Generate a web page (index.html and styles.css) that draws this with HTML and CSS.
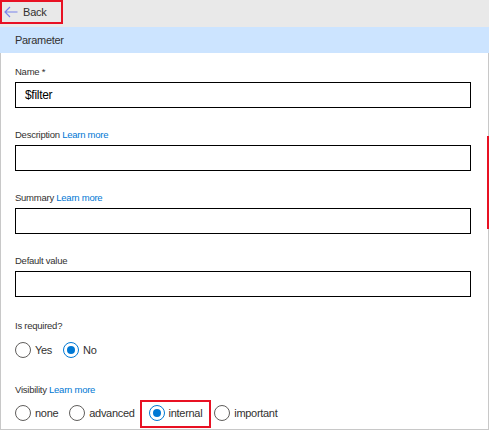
FILE: index.html
```html
<!DOCTYPE html>
<html>
<head>
<meta charset="utf-8">
<link rel="stylesheet" href="styles.css">
</head>
<body>
<div class="page">
  <div class="topbar">
    <div class="back">
      <svg class="arrow" width="14" height="12" viewBox="0 0 14 12"><path d="M13.5 6H1M6 1L1 6l5 5" fill="none" stroke="#7b83eb" stroke-width="1.2"/></svg>
      <span>Back</span>
    </div>
  </div>
  <div class="header">Parameter</div>
  <div class="panel">
    <div class="field">
      <div class="label">Name *</div>
      <div class="input">$filter</div>
    </div>
    <div class="field">
      <div class="label">Description <a class="link">Learn more</a></div>
      <div class="input"></div>
    </div>
    <div class="field">
      <div class="label">Summary <a class="link">Learn more</a></div>
      <div class="input"></div>
    </div>
    <div class="field">
      <div class="label">Default value</div>
      <div class="input"></div>
    </div>
    <div class="group group-req">
      <div class="label">Is required?</div>
      <div class="radios">
        <div class="opt"><span class="radio"></span><span>Yes</span></div>
        <div class="opt"><span class="radio on"></span><span>No</span></div>
      </div>
    </div>
    <div class="group group-vis">
      <div class="label">Visibility <a class="link">Learn more</a></div>
      <div class="radios">
        <div class="opt"><span class="radio"></span><span>none</span></div>
        <div class="opt"><span class="radio"></span><span>advanced</span></div>
        <div class="opt mark"><span class="radio on"></span><span>internal</span></div>
        <div class="opt"><span class="radio"></span><span>important</span></div>
      </div>
    </div>
    <div class="scroll"></div>
  </div>
</div>
</body>
</html>
```
FILE: styles.css
```css
* { box-sizing: border-box; }
html, body { margin: 0; padding: 0; background: #fff; }
body { font-family: "Liberation Sans", Arial, sans-serif; color: #000; }
.page { width: 489px; height: 431px; overflow: hidden; position: relative; }
.topbar { height: 27px; background: #e9e9e9; display: flex; align-items: flex-start; }
.back {
  width: 63px; height: 24px; border: 2px solid #e81123;
  display: flex; align-items: center; gap: 5px; padding-left: 2px;
  font-size: 11px; letter-spacing: -0.2px; color: #323130;
}
.arrow { display: block; }
.header {
  height: 26px; background: #cce4ff; padding-left: 15px;
  display: flex; align-items: center; font-size: 11px; letter-spacing: -0.3px; color: #323130;
}
.panel {
  position: relative; width: 489px; height: 377px;
  border-left: 1px solid #c8c8c8; border-right: 1px solid #c8c8c8; border-bottom: 1px solid #c8c8c8;
  padding: 11px 0 0 14px;
}
.field { margin-bottom: 19px; }
.label {
  font-size: 9.5px; letter-spacing: -0.25px; line-height: 16px; height: 16px;
  margin-bottom: 2px; color: #323130;
}
.link { color: #0078d4; }
.input {
  width: 456px; height: 26px; border: 1px solid #000;
  font-size: 12px; letter-spacing: -0.3px; line-height: 24px; padding-left: 9px; color: #000;
}
.group-req { margin-top: 21px; }
.group-req .label { margin-bottom: 8px; }
.group-vis { margin-top: 24px; }
.group-vis .label { margin-bottom: 7px; }
.radios {
  display: flex; align-items: center; gap: 11px; height: 16px;
  font-size: 11px; letter-spacing: -0.3px; color: #323130;
}
.opt { display: flex; align-items: center; gap: 4px; position: relative; }
.radio {
  width: 16px; height: 16px; border-radius: 50%; border: 1px solid #605e5c; background: #fff;
  display: flex; align-items: center; justify-content: center;
}
.radio.on { border-color: #0078d4; }
.radio.on::after { content: ""; width: 8px; height: 8px; border-radius: 50%; background: #0078d4; }
.mark { margin-left: 3px; margin-right: 1px; }
.mark::after {
  content: ""; position: absolute; left: -9px; right: -9px; top: -5px; bottom: -7px;
  border: 2px solid #e81123;
}
.scroll { position: absolute; right: -1px; top: 83px; width: 2px; height: 93px; background: #e81123; }
```
